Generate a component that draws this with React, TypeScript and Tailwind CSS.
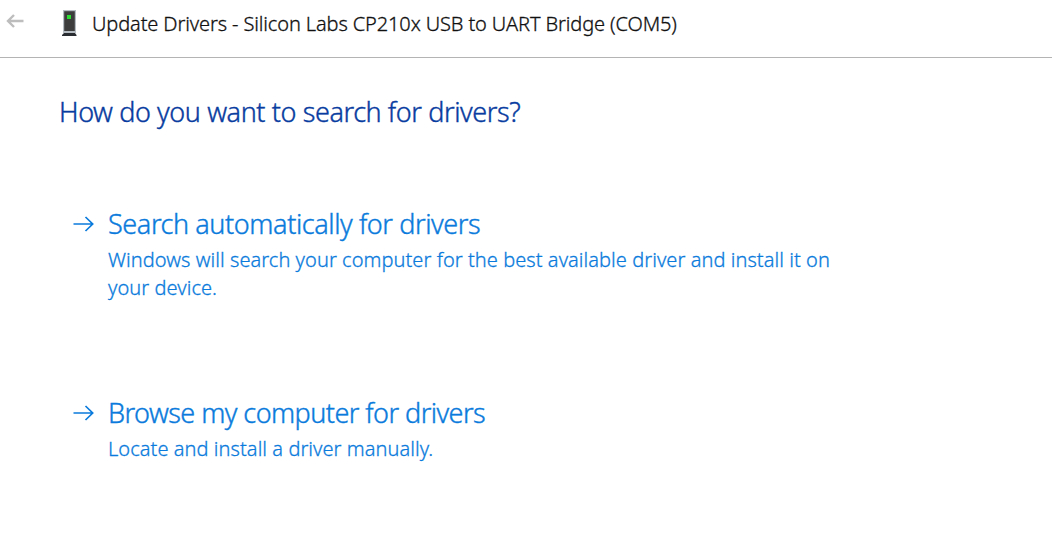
function Arrow() {
  return (
    <svg className="mt-[10px] h-[16px] w-[22px] shrink-0" viewBox="0 0 22 16" fill="none" stroke="currentColor" strokeWidth="1.7">
      <path d="M0.5 8H20M12.5 1L19.7 8L12.5 15" />
    </svg>
  );
}

function BackArrow() {
  return (
    <svg className="mt-[14px] h-[14px] w-[18px] shrink-0" viewBox="0 0 18 14" fill="none" stroke="#bdbdbd" strokeWidth="2.4">
      <path d="M17.5 7H2M8 1L2 7L8 13" />
    </svg>
  );
}

function DeviceIcon() {
  return (
    <svg className="mt-[9px] ml-[38px] h-[28px] w-[15px] shrink-0" viewBox="0 0 15 28">
      <path d="M1 1H14V24H1Z" fill="#b5bcc2" />
      <path d="M2.2 2.2H12.8V22H2.2Z" fill="#3d3d3d" />
      <path d="M2 24H13L14.5 26V27H0V26Z" fill="#292c30" />
      <path d="M5 6H9V10H5Z" fill="#2ddc32" />
    </svg>
  );
}

type OptionProps = { title: string; titleClass: string; lines: string[] };

function Option({ title, titleClass, lines }: OptionProps) {
  return (
    <button className="flex items-start gap-[13px] text-left text-[#0a7bdc]">
      <Arrow />
      <span className="block whitespace-nowrap">
        <span className={`block text-[27px] leading-[36px] [-webkit-text-stroke:0.4px_currentColor] ${titleClass}`}>{title}</span>
        <span className="block pt-[4px]">
          {lines.map((line) => (
            <span key={line} className="block text-[20px] leading-[28px] tracking-[0.06px] [-webkit-text-stroke:0.3px_currentColor]">{line}</span>
          ))}
        </span>
      </span>
    </button>
  );
}

export default function App() {
  return (
    <main className="h-[545px] w-[1052px] overflow-hidden bg-white font-['Noto_Sans','Open_Sans',sans-serif] font-light">
      <header className="flex h-[58px] border-b border-[#b4b4b4] pl-[6px]">
        <BackArrow />
        <DeviceIcon />
        <h1 className="ml-[15px] pt-[9px] text-[20px] leading-[30px] font-light tracking-[-0.12px] whitespace-nowrap text-[#111111] [-webkit-text-stroke:0.3px_currentColor]">
          Update Drivers - Silicon Labs CP210x USB to UART Bridge (COM5)
        </h1>
      </header>
      <h2 className="pt-[36px] pl-[59px] text-[27px] leading-[36px] font-light tracking-[-0.41px] whitespace-nowrap text-[#083ca0] [-webkit-text-stroke:0.4px_currentColor]">
        How do you want to search for drivers?
      </h2>
      <div className="flex flex-col gap-[93px] pt-[76px] pl-[73px]">
        <Option
          title="Search automatically for drivers"
          titleClass="tracking-[-0.41px]"
          lines={["Windows will search your computer for the best available driver and install it on", "your device."]}
        />
        <Option
          title="Browse my computer for drivers"
          titleClass="tracking-[-0.55px]"
          lines={["Locate and install a driver manually."]}
        />
      </div>
    </main>
  );
}
